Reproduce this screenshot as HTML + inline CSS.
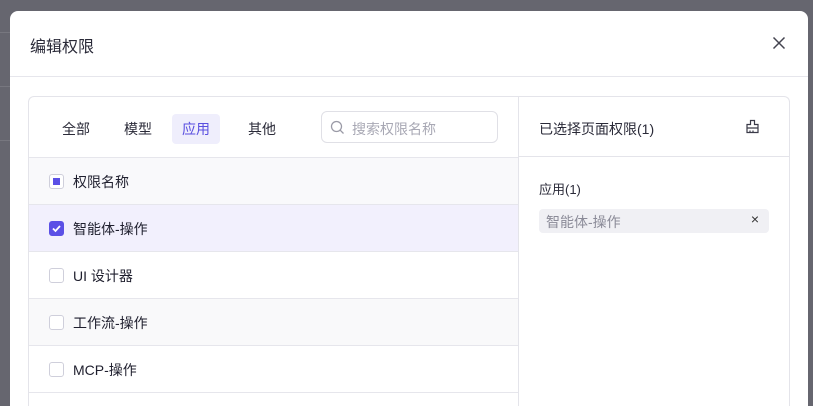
<!DOCTYPE html>
<html><head><meta charset="utf-8"><style>
*{box-sizing:border-box;margin:0;padding:0}
html,body{width:813px;height:406px;overflow:hidden}
body{background:#66666f;font-family:"Liberation Sans","Noto Sans CJK SC",sans-serif;color:#1f1f2e;position:relative}
.bgline{position:absolute;left:0;width:10px;height:1px;background:#77777f}
.modal{position:absolute;left:10px;top:11px;width:798px;height:395px;background:#fff;border-radius:8px 8px 0 0;overflow:hidden}
.title{position:absolute;left:20px;top:22px;font-size:16px;color:#2a2a38}
.close{position:absolute;left:762px;top:25px}
.hsep{position:absolute;left:0;top:65px;width:798px;height:1px;background:#e6e6ec}
.box{position:absolute;left:18px;top:85px;width:762px;height:310px;border:1px solid #e4e4ea;border-bottom:none;border-radius:6px 6px 0 0;overflow:hidden}
.vdiv{position:absolute;left:489px;top:0;width:1px;height:310px;background:#e4e4ea}
.tab{position:absolute;top:17px;height:30px;line-height:30px;font-size:14px;padding:0 10px;color:#2a2a38;border-radius:4px}
.tab.act{background:#efeefc;color:#5a4fe0}
.search{position:absolute;left:292px;top:14px;width:177px;height:32px;border:1px solid #e0e0e6;border-radius:6px}
.search span{position:absolute;left:30px;top:7px;font-size:14px;color:#a8a8b4}
.row{position:absolute;left:0;width:489px;height:47px;border-top:1px solid #e6e6ec;font-size:14px}
.row span{position:absolute;left:44px;top:14px}
.cb{position:absolute;left:20px;top:16px;width:15px;height:15px;border:1px solid #cfcfdb;border-radius:3px;background:#fff}
.rt{position:absolute;top:22px;font-size:14px;color:#2a2a38}
.rsep{position:absolute;left:490px;top:59px;width:271px;height:1px;background:#e4e4ea}
.tag{position:absolute;left:510px;top:112px;width:230px;height:24px;background:#f0f0f4;border-radius:4px;font-size:14px;color:#8b8b98}
</style></head><body>
<div class="bgline" style="top:32px"></div><div class="bgline" style="top:86px"></div><div class="bgline" style="top:140px"></div>
<div class="modal">
<div class="title">编辑权限</div>
<svg class="close" width="14" height="14" viewBox="0 0 14 14"><path d="M1.5 1.5L12.5 12.5M12.5 1.5L1.5 12.5" stroke="#444450" stroke-width="1.5"/></svg>
<div class="hsep"></div>
<div class="box">
<div class="tab" style="left:23px">全部</div>
<div class="tab" style="left:85px">模型</div>
<div class="tab act" style="left:143px">应用</div>
<div class="tab" style="left:209px">其他</div>
<div class="search"><svg style="position:absolute;left:8px;top:8px" width="15" height="15" viewBox="0 0 15 15"><circle cx="6.5" cy="6.5" r="5" fill="none" stroke="#9a9aa6" stroke-width="1.3"/><path d="M10.2 10.2L13.5 13.5" stroke="#9a9aa6" stroke-width="1.3"/></svg><span>搜索权限名称</span></div>
<div class="row" style="top:60px;background:#f9f9fb"><div class="cb"><div style="position:absolute;left:3px;top:3px;width:7px;height:7px;background:#5b50e6"></div></div><span>权限名称</span></div>
<div class="row" style="top:107px;background:#f2f0fd"><div class="cb" style="background:#5b50e6;border-color:#5b50e6"><svg width="13" height="13" viewBox="0 0 13 13" style="position:absolute;left:0;top:0"><path d="M3 6.5L5.5 9L10 4" stroke="#fff" stroke-width="1.8" fill="none"/></svg></div><span>智能体-操作</span></div>
<div class="row" style="top:154px"><div class="cb"></div><span>UI 设计器</span></div>
<div class="row" style="top:201px;background:#f9f9fa"><div class="cb"></div><span>工作流-操作</span></div>
<div class="row" style="top:248px"><div class="cb"></div><span>MCP-操作</span></div>
<div class="row" style="top:295px;height:15px"></div>
<div class="vdiv"></div>
<div class="rt" style="left:510px">已选择页面权限(1)</div>
<svg style="position:absolute;left:716px;top:22px" width="15" height="15" viewBox="0 0 15 15"><path d="M5.5 1.5h4v4h3.5v8h-11v-8h3.5z M2 9h11 M5 13.5v-2 M8 13.5v-2" fill="none" stroke="#3a3a48" stroke-width="1.2"/></svg>
<div class="rsep"></div>
<div style="position:absolute;left:510px;top:82px;font-size:13px;color:#2a2a38">应用(1)</div>
<div class="tag"><span style="position:absolute;left:7px;top:3px">智能体-操作</span><span style="position:absolute;right:10px;top:2px;color:#333;font-size:14px">×</span></div>
</div>
</div>
</body></html>
